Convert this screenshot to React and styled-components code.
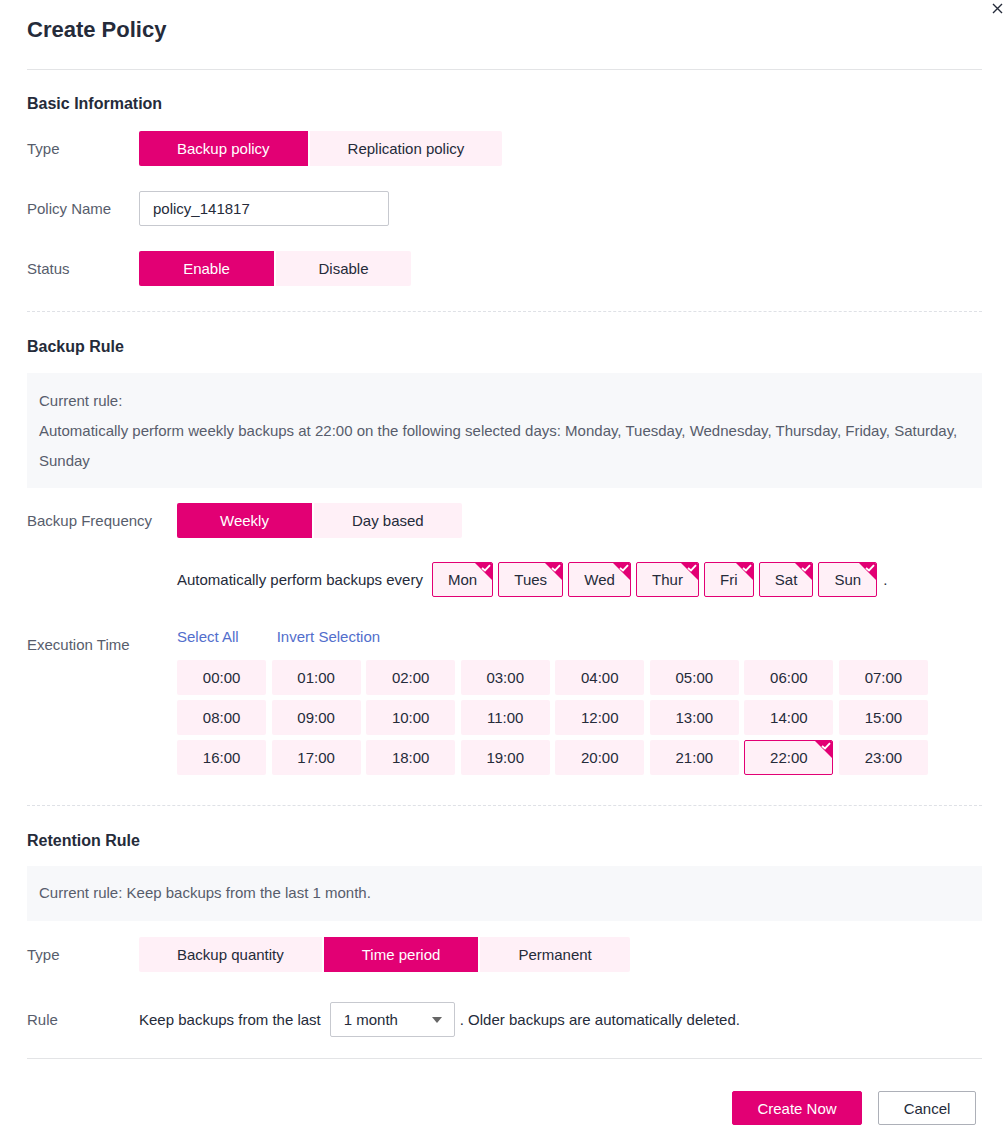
import React from "react";
import styled, { createGlobalStyle, css } from "styled-components";

const PINK = "#e20074";
const LIGHT = "#fff0f7";
const TEXT = "#252b3a";
const LABEL = "#575d6c";

const Global = createGlobalStyle`
  html, body { margin: 0; padding: 0; background: #fff; }
  body { font-family: "Liberation Sans", Arial, sans-serif; font-size: 15px; color: ${TEXT}; }
  * { box-sizing: border-box; }
`;

const Dialog = styled.div`
  position: relative;
  width: 1004px;
  padding: 0 22px 0 27px;
`;

const Close = styled.svg`
  position: absolute;
  top: 3px;
  right: 1px;
  width: 11px;
  height: 11px;
`;

const Header = styled.header`
  padding: 15px 0 24px;
  border-bottom: 1px solid #e3e4e6;
`;

const Title = styled.h1`
  margin: 0;
  font-size: 22px;
  line-height: 30px;
  font-weight: 700;
  color: ${TEXT};
`;

const Section = styled.section`
  padding: ${(p) => p.$top}px 0 ${(p) => p.$bottom}px;
  border-bottom: 1px ${(p) => (p.$solid ? "solid #e3e4e6" : "dashed #dfe1e6")};
`;

const SectionTitle = styled.h2`
  margin: 0 0 ${(p) => p.$gap}px;
  font-size: 16px;
  line-height: 24px;
  font-weight: 700;
  color: ${TEXT};
`;

const Row = styled.div`
  display: flex;
  align-items: ${(p) => (p.$top ? "flex-start" : "center")};
  margin-top: ${(p) => p.$mt || 0}px;
`;

const Label = styled.div`
  flex: 0 0 ${(p) => p.$w}px;
  color: ${LABEL};
  line-height: 20px;
  padding-top: ${(p) => p.$pt || 0}px;
`;

const Segments = styled.div`
  display: flex;
  gap: 2px;
`;

const Segment = styled.button`
  height: 35px;
  min-width: 135px;
  padding: 0 38px;
  border: none;
  font: inherit;
  font-size: 15px;
  cursor: pointer;
  background: ${(p) => (p.$active ? PINK : LIGHT)};
  color: ${(p) => (p.$active ? "#fff" : TEXT)};
  &:first-child { border-radius: 2px 0 0 2px; }
  &:last-child { border-radius: 0 2px 2px 0; }
`;

const TextInput = styled.input`
  width: 250px;
  height: 35px;
  padding: 0 13px;
  border: 1px solid #c7c9cf;
  border-radius: 2px;
  font: inherit;
  font-size: 15px;
  color: ${TEXT};
  outline: none;
`;

const InfoBox = styled.div`
  background: #f7f8fa;
  padding: ${(p) => p.$pt}px 12px ${(p) => p.$pb}px;
  line-height: 30px;
  color: ${LABEL};
`;

const Inline = styled.div`
  display: flex;
  align-items: center;
  gap: ${(p) => p.$gap || 0}px;
  color: ${TEXT};
`;

const selectedMark = css`
  &::after {
    content: "";
    position: absolute;
    top: -1px;
    right: -1px;
    border-top: 19px solid ${PINK};
    border-left: 19px solid transparent;
  }
`;

const Chip = styled.div`
  position: relative;
  height: 35px;
  display: flex;
  align-items: center;
  justify-content: center;
  background: ${LIGHT};
  border: 1px solid ${(p) => (p.$selected ? PINK : "transparent")};
  border-radius: 2px;
  color: ${TEXT};
  overflow: hidden;
  ${(p) => (p.$selected ? selectedMark : "")}
`;

const DayChip = styled(Chip)`
  padding: 0 15px;
`;

const Tick = styled.svg`
  position: absolute;
  top: 1px;
  right: 1px;
  width: 10px;
  height: 8px;
  z-index: 1;
`;

const Links = styled.div`
  display: flex;
  gap: 38px;
  line-height: 20px;
`;

const Link = styled.a`
  color: #526ecc;
  text-decoration: none;
  cursor: pointer;
`;

const TimeGrid = styled.div`
  margin-top: 13px;
  width: 751px;
  display: grid;
  grid-template-columns: repeat(8, 1fr);
  gap: 5px 5.4px;
`;

const Select = styled.div`
  width: 125px;
  height: 35px;
  border: 1px solid #c7c9cf;
  border-radius: 2px;
  display: flex;
  align-items: center;
  justify-content: space-between;
  padding: 0 12px 0 13px;
  color: ${TEXT};
`;

const Caret = styled.span`
  width: 0;
  height: 0;
  border-left: 5px solid transparent;
  border-right: 5px solid transparent;
  border-top: 6px solid #666;
`;

const Footer = styled.footer`
  display: flex;
  justify-content: flex-end;
  gap: 16px;
  padding: 32px 6px 0 0;
`;

const Button = styled.button`
  height: 34px;
  padding: 0 24px;
  min-width: ${(p) => p.$w}px;
  border-radius: 2px;
  font: inherit;
  font-size: 15px;
  cursor: pointer;
  border: 1px solid ${(p) => (p.$primary ? PINK : "#adb0b8")};
  background: ${(p) => (p.$primary ? PINK : "#fff")};
  color: ${(p) => (p.$primary ? "#fff" : TEXT)};
`;

const Check = () => (
  <Tick viewBox="0 0 10 8">
    <path d="M1 4 L4 6.5 L9 1.2" fill="none" stroke="#fff" strokeWidth="1.9" />
  </Tick>
);

const days = ["Mon", "Tues", "Wed", "Thur", "Fri", "Sat", "Sun"];
const hours = Array.from({ length: 24 }, (_, i) => `${String(i).padStart(2, "0")}:00`);

export default function App() {
  return (
    <>
      <Global />
      <Dialog>
        <Close viewBox="0 0 11 11">
          <path d="M1 1 L10 10 M10 1 L1 10" stroke="#252b3a" strokeWidth="1.4" fill="none" />
        </Close>
        <Header>
          <Title>Create Policy</Title>
        </Header>

        <Section $top={22} $bottom={25}>
          <SectionTitle $gap={15}>Basic Information</SectionTitle>
          <Row>
            <Label $w={112}>Type</Label>
            <Segments>
              <Segment $active>Backup policy</Segment>
              <Segment>Replication policy</Segment>
            </Segments>
          </Row>
          <Row $mt={25}>
            <Label $w={112}>Policy Name</Label>
            <TextInput defaultValue="policy_141817" />
          </Row>
          <Row $mt={25}>
            <Label $w={112}>Status</Label>
            <Segments>
              <Segment $active>Enable</Segment>
              <Segment>Disable</Segment>
            </Segments>
          </Row>
        </Section>

        <Section $top={23} $bottom={30}>
          <SectionTitle $gap={14}>Backup Rule</SectionTitle>
          <InfoBox $pt={13} $pb={12}>
            Current rule:
            <br />
            Automatically perform weekly backups at 22:00 on the following selected days: Monday, Tuesday, Wednesday, Thursday, Friday, Saturday, Sunday
          </InfoBox>
          <Row $mt={15}>
            <Label $w={150}>Backup Frequency</Label>
            <Segments>
              <Segment $active>Weekly</Segment>
              <Segment>Day based</Segment>
            </Segments>
          </Row>
          <Row $mt={24}>
            <Label $w={150} />
            <Inline>
              <span style={{ marginRight: 9 }}>Automatically perform backups every</span>
              <Inline $gap={5.2}>
                {days.map((d) => (
                  <DayChip key={d} $selected>
                    {d}
                    <Check />
                  </DayChip>
                ))}
              </Inline>
              <span style={{ marginLeft: 6 }}>.</span>
            </Inline>
          </Row>
          <Row $mt={30} $top>
            <Label $w={150} $pt={8}>Execution Time</Label>
            <div>
              <Links>
                <Link>Select All</Link>
                <Link>Invert Selection</Link>
              </Links>
              <TimeGrid>
                {hours.map((h) => (
                  <Chip key={h} $selected={h === "22:00"}>
                    {h}
                    {h === "22:00" && <Check />}
                  </Chip>
                ))}
              </TimeGrid>
            </div>
          </Row>
        </Section>

        <Section $top={23} $bottom={21} $solid>
          <SectionTitle $gap={13}>Retention Rule</SectionTitle>
          <InfoBox $pt={12} $pb={13}>Current rule: Keep backups from the last 1 month.</InfoBox>
          <Row $mt={16}>
            <Label $w={112}>Type</Label>
            <Segments>
              <Segment>Backup quantity</Segment>
              <Segment $active>Time period</Segment>
              <Segment>Permanent</Segment>
            </Segments>
          </Row>
          <Row $mt={30}>
            <Label $w={112}>Rule</Label>
            <Inline>
              <span style={{ marginRight: 9 }}>Keep backups from the last</span>
              <Select>
                <span>1 month</span>
                <Caret />
              </Select>
              <span style={{ marginLeft: 5 }}>. Older backups are automatically deleted.</span>
            </Inline>
          </Row>
        </Section>

        <Footer>
          <Button $primary $w={130}>Create Now</Button>
          <Button $w={98}>Cancel</Button>
        </Footer>
      </Dialog>
    </>
  );
}
